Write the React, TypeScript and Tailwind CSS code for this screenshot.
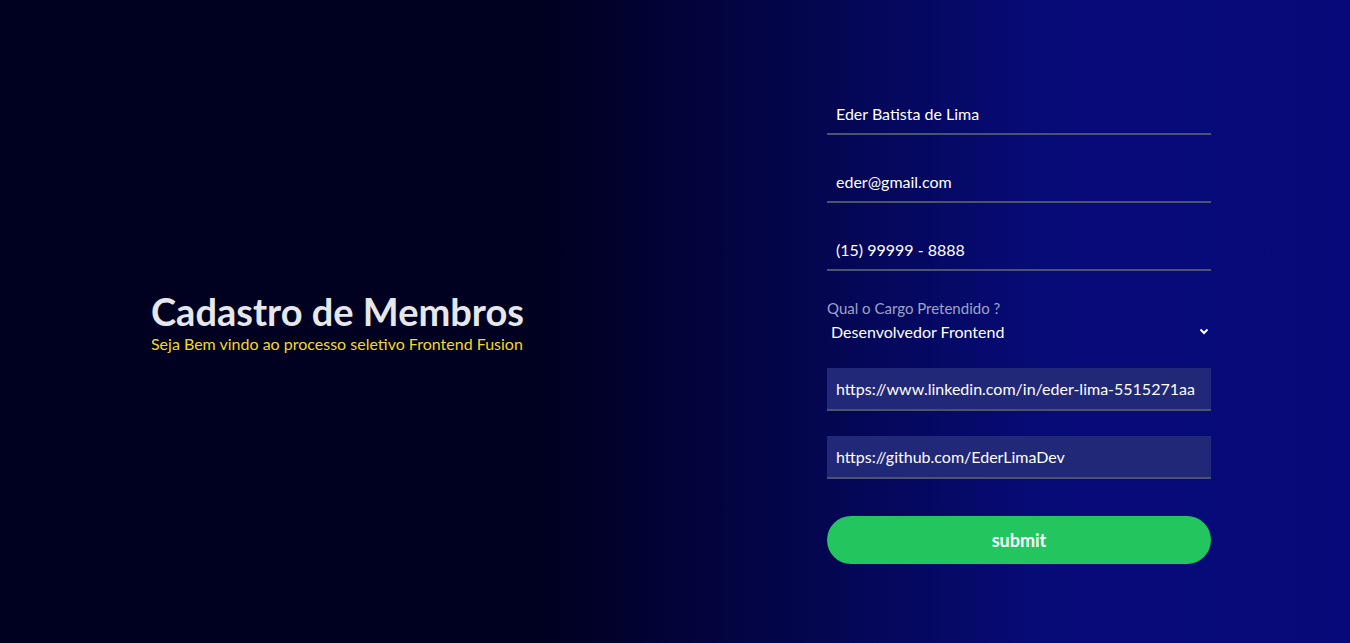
import React from "react";

const font = { fontFamily: "Lato, 'Noto Sans', sans-serif" };

const App: React.FC = () => {
  const fields = [
    { value: "Eder Batista de Lima", type: "text" },
    { value: "eder@gmail.com", type: "email" },
    { value: "(15) 99999 - 8888", type: "tel" },
  ];

  return (
    <div
      style={font}
      className="h-screen w-full grid grid-cols-2 items-center bg-[linear-gradient(to_right,#000020_40%,#070b78_78%,#07097a)]"
    >
      <div className="flex flex-col items-center">
        <div>
          <h1 className="text-[38px] leading-[38px] font-bold text-gray-200">Cadastro de Membros</h1>
          <p className="mt-[6px] text-[16px] leading-[16px] text-[#f3d923]">
            Seja Bem vindo ao processo seletivo Frontend Fusion
          </p>
        </div>
      </div>

      <form className="w-[384px] ml-[152px] flex flex-col pt-[12px]">
        {fields.map((f, i) => (
          <input
            key={i}
            type={f.type}
            defaultValue={f.value}
            className="h-[44px] mb-[24px] px-[9px] pt-[2px] bg-transparent border-b-2 border-[#4b5563] text-white text-[16px] outline-none"
          />
        ))}

        <label className="mt-[4px] text-[15px] leading-[18px] text-[#9ca3c6]">Qual o Cargo Pretendido ?</label>
        <div className="relative mt-[3px]">
          <select
            defaultValue="front"
            className="w-full appearance-none bg-transparent text-white text-[16px] pl-[4px] h-[24px] outline-none"
          >
            <option value="front" className="text-black">Desenvolvedor Frontend</option>
            <option value="back" className="text-black">Desenvolvedor Backend</option>
          </select>
          <svg
            className="absolute right-[2px] top-[8px] pointer-events-none"
            width="10"
            height="7"
            viewBox="0 0 10 7"
            fill="none"
          >
            <path d="M1.5 1.5 L5 5 L8.5 1.5" stroke="white" strokeWidth="2" />
          </svg>
        </div>

        <input
          type="url"
          defaultValue="https://www.linkedin.com/in/eder-lima-5515271aa"
          className="mt-[24px] h-[43px] px-[9px] bg-[#212878] border-b-2 border-[#4b5563] text-white text-[16px] outline-none"
        />
        <input
          type="url"
          defaultValue="https://github.com/EderLimaDev"
          className="mt-[25px] h-[43px] px-[9px] bg-[#212878] border-b-2 border-[#4b5563] text-white text-[16px] outline-none"
        />

        <button
          type="button"
          className="mt-[37px] h-[48px] rounded-full bg-[#22c55e] text-white text-[18px] font-bold"
        >
          submit
        </button>
      </form>
    </div>
  );
};

export default App;
